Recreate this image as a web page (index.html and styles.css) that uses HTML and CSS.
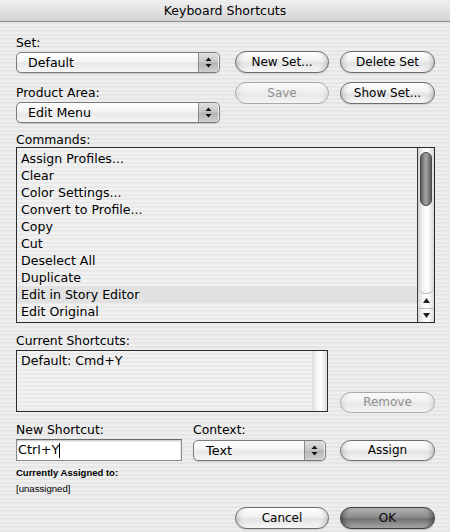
FILE: index.html
```html
<!DOCTYPE html>
<html>
<head>
<meta charset="utf-8">
<link rel="stylesheet" href="styles.css">
</head>
<body>
<div class="window">
  <div class="titlebar">Keyboard Shortcuts</div>
  <div class="content">
    <div class="top">
      <div class="leftcol">
        <div class="label">Set:</div>
        <div class="popup p-top">
          <span class="ptext">Default</span>
          <span class="stepper"><svg width="7" height="11" viewBox="0 0 7 11"><path d="M3.5 0.5 L6.5 4 L0.5 4 Z" fill="#111"/><path d="M0.5 7 L6.5 7 L3.5 10.5 Z" fill="#111"/></svg></span>
        </div>
        <div class="label l-area">Product Area:</div>
        <div class="popup p-top">
          <span class="ptext">Edit Menu</span>
          <span class="stepper"><svg width="7" height="11" viewBox="0 0 7 11"><path d="M3.5 0.5 L6.5 4 L0.5 4 Z" fill="#111"/><path d="M0.5 7 L6.5 7 L3.5 10.5 Z" fill="#111"/></svg></span>
        </div>
      </div>
      <div class="rightcol">
        <div class="btnrow">
          <button class="btn b-l">New Set...</button>
          <button class="btn b-r">Delete Set</button>
        </div>
        <div class="btnrow r2">
          <button class="btn b-l disabled">Save</button>
          <button class="btn b-r">Show Set...</button>
        </div>
      </div>
    </div>

    <div class="label l-cmd">Commands:</div>
    <div class="list">
      <div class="rows">
        <div class="row">Assign Profiles...</div>
        <div class="row">Clear</div>
        <div class="row">Color Settings...</div>
        <div class="row">Convert to Profile...</div>
        <div class="row">Copy</div>
        <div class="row">Cut</div>
        <div class="row">Deselect All</div>
        <div class="row">Duplicate</div>
        <div class="row hl">Edit in Story Editor</div>
        <div class="row">Edit Original</div>
      </div>
      <div class="scroll">
        <div class="track"><div class="thumb"></div></div>
        <div class="arrows">
          <div class="arr"><svg width="7" height="5" viewBox="0 0 7 5"><path d="M3.5 0 L7 5 L0 5 Z" fill="#222"/></svg></div>
          <div class="arr arr-d"><svg width="7" height="5" viewBox="0 0 7 5"><path d="M0 0 L7 0 L3.5 5 Z" fill="#222"/></svg></div>
        </div>
      </div>
    </div>

    <div class="current">
      <div class="curcol">
        <div class="label l-cur">Current Shortcuts:</div>
        <div class="curbox">
          <div class="currows"><div class="row">Default: Cmd+Y</div></div>
          <div class="cscroll"></div>
        </div>
      </div>
      <button class="btn disabled b-remove">Remove</button>
    </div>

    <div class="newgrid">
      <div class="label">New Shortcut:</div>
      <div class="label">Context:</div>
      <div></div>
      <div class="input">Ctrl+Y<span class="caret"></span></div>
      <div class="popup p-ctx">
        <span class="ptext ctx">Text</span>
        <span class="stepper"><svg width="7" height="11" viewBox="0 0 7 11"><path d="M3.5 0.5 L6.5 4 L0.5 4 Z" fill="#111"/><path d="M0.5 7 L6.5 7 L3.5 10.5 Z" fill="#111"/></svg></span>
      </div>
      <button class="btn b-assign">Assign</button>
    </div>

    <div class="small bold">Currently Assigned to:</div>
    <div class="small s2">[unassigned]</div>

    <div class="footer">
      <button class="btn b-l">Cancel</button>
      <button class="btn b-r default">OK</button>
    </div>
  </div>
</div>
</body>
</html>
```

FILE: styles.css
```css
html, body {
  margin: 0;
  padding: 0;
}
body {
  width: 450px;
  height: 532px;
  overflow: hidden;
  font-family: "DejaVu Sans", "Noto Sans", sans-serif;
  font-size: 12.4px;
  color: #000;
}
.window {
  width: 450px;
  height: 532px;
  background: repeating-linear-gradient(to bottom, #eeeeee 0px, #eeeeee 2px, #e6e6e6 2px, #e6e6e6 4px);
}
.titlebar {
  height: 21px;
  line-height: 21px;
  text-align: center;
  font-size: 12.5px;
  border-bottom: 1px solid #8c8c8c;
  border-radius: 5px 5px 0 0;
  background: linear-gradient(to bottom, #f0f0f0 0%, #e2e2e2 50%, #d4d4d4 100%);
}
.content {
  padding: 0 15px 0 16px;
}
.label {
  line-height: 15px;
  height: 15px;
  white-space: nowrap;
}
.top {
  display: flex;
  gap: 15px;
  margin-top: 13px;
}
.leftcol {
  width: 204px;
}
.rightcol {
  width: 200px;
  padding-top: 16px;
}
.btnrow {
  display: flex;
  gap: 11px;
}
.btnrow.r2 {
  margin-top: 9px;
}
.l-area {
  margin-top: 12px;
}
.popup {
  height: 19px;
  border: 1px solid #7a7a7a;
  border-radius: 5px;
  background: linear-gradient(to bottom, #ffffff 0%, #f4f4f4 45%, #e8e8e8 55%, #f6f6f6 100%);
  display: flex;
  align-items: center;
  box-shadow: 0 1px 1px rgba(0,0,0,0.15);
  overflow: hidden;
}
.p-top {
  margin-top: 2px;
}
.ptext {
  flex: 1;
  padding-left: 11px;
  line-height: 19px;
  font-size: 12.6px;
}
.ptext.ctx {
  padding-left: 12px;
  font-size: 12.9px;
}
.stepper {
  width: 19px;
  height: 19px;
  border-left: 1px solid #8a8a8a;
  background: linear-gradient(to bottom, #e0e0e0 0%, #c6c6c6 48%, #b4b4b4 52%, #d0d0d0 100%);
  display: flex;
  align-items: center;
  justify-content: center;
  margin-right: 1px;
  border-radius: 0 4px 4px 0;
}
.btn {
  height: 22px;
  border: 1px solid #6c6c6c;
  border-radius: 11px;
  background: linear-gradient(to bottom, #ffffff 0%, #f2f2f2 45%, #e3e3e3 55%, #f7f7f7 100%);
  box-shadow: inset 6px 0 5px -4px rgba(0,0,0,0.18), inset -6px 0 5px -4px rgba(0,0,0,0.18), 0 1px 1px rgba(0,0,0,0.12);
  font-family: "DejaVu Sans", "Noto Sans", sans-serif;
  font-size: 12px;
  color: #000;
  padding: 0;
  line-height: 20px;
  text-align: center;
  white-space: nowrap;
}
.b-l {
  width: 94px;
}
.b-r {
  width: 95px;
}
.btn.disabled {
  color: #8e8e8e;
  border-color: #a9a9a9;
  box-shadow: inset 6px 0 5px -4px rgba(0,0,0,0.08), inset -6px 0 5px -4px rgba(0,0,0,0.08);
  background: linear-gradient(to bottom, #fafafa 0%, #f0f0f0 45%, #e8e8e8 55%, #f4f4f4 100%);
}
.btn.default {
  border-color: #3c3c3c;
  background: linear-gradient(to bottom, #b4b4b4 0%, #8c8c8c 45%, #727272 55%, #a6a6a6 100%);
  box-shadow: inset 6px 0 5px -4px rgba(0,0,0,0.4), inset -6px 0 5px -4px rgba(0,0,0,0.4), 0 1px 1px rgba(0,0,0,0.2);
  color: #0a0a0a;
}
.l-cmd {
  margin-top: 9px;
}
.list {
  height: 174px;
  border: 1px solid #2c2c2c;
  display: flex;
  background: repeating-linear-gradient(to bottom, #f1f1f1 0px, #f1f1f1 2px, #e9e9e9 2px, #e9e9e9 4px);
}
.rows {
  flex: 1;
  padding-top: 2px;
  overflow: hidden;
}
.row {
  height: 17px;
  line-height: 17px;
  padding-left: 4px;
  font-size: 12.6px;
  white-space: nowrap;
}
.row.hl {
  background: #e1e1e1;
}
.scroll {
  width: 16px;
  border-left: 1px solid #3a3a3a;
  display: flex;
  flex-direction: column;
  background: linear-gradient(to right, #d8d8d8 0%, #f8f8f8 35%, #ffffff 60%, #dcdcdc 100%);
}
.track {
  flex: 1;
  padding: 4px 2px 0 2px;
  border-radius: 0 0 7px 7px;
  border-bottom: 1px solid #b8b8b8;
  background: linear-gradient(to right, #d0d0d0 0%, #f4f4f4 30%, #ffffff 60%, #d8d8d8 100%);
}
.thumb {
  height: 52px;
  border-radius: 6px;
  border: 1px solid #4a4a4a;
  background: linear-gradient(to right, #5a5a5a 0%, #8e8e8e 30%, #a4a4a4 50%, #8a8a8a 70%, #5e5e5e 100%);
}
.arrows {
  height: 28px;
  display: flex;
  flex-direction: column;
}
.arr {
  flex: 1;
  display: flex;
  align-items: center;
  justify-content: center;
}
.arr-d {
  border-top: 1px solid #bdbdbd;
}
.current {
  display: flex;
  align-items: flex-end;
  gap: 12px;
}
.curcol {
  width: 312px;
}
.l-cur {
  margin-top: 10px;
}
.curbox {
  margin-top: 2px;
  height: 60px;
  border: 1px solid #2c2c2c;
  display: flex;
  background: repeating-linear-gradient(to bottom, #f1f1f1 0px, #f1f1f1 2px, #e9e9e9 2px, #e9e9e9 4px);
}
.currows {
  flex: 1;
  padding-top: 1px;
}
.cscroll {
  width: 15px;
  background: linear-gradient(to right, #dcdcdc 0%, #f6f6f6 35%, #ffffff 60%, #dadada 100%);
}
.b-remove {
  width: 95px;
  height: 21px;
  line-height: 19px;
  margin-bottom: -1px;
}
.newgrid {
  display: grid;
  grid-template-columns: 166px 133px 98px;
  column-gap: 11px;
  margin-top: 10px;
}
.input {
  margin-top: 2px;
  height: 20px;
  line-height: 20px;
  border: 1px solid #8a8a8a;
  border-top-color: #6a6a6a;
  background: #ffffff;
  box-shadow: inset 0 1px 2px rgba(0,0,0,0.25);
  padding-left: 1px;
  font-size: 12.8px;
  display: flex;
  align-items: center;
}
.caret {
  display: inline-block;
  width: 1px;
  height: 15px;
  background: #000;
}
.p-ctx {
  margin-top: 3px;
}
.b-assign {
  width: 95px;
  justify-self: end;
  margin-top: 3px;
  height: 21px;
  line-height: 19px;
}
.small {
  font-family: "Liberation Sans", Arial, sans-serif;
  font-size: 9.6px;
  line-height: 13px;
  height: 13px;
  white-space: nowrap;
}
.small.bold {
  font-weight: bold;
  margin-top: 5px;
  font-size: 9.5px;
}
.s2 {
  margin-top: 3px;
}
.footer {
  display: flex;
  justify-content: flex-end;
  gap: 11px;
  margin-top: 12px;
}
```
